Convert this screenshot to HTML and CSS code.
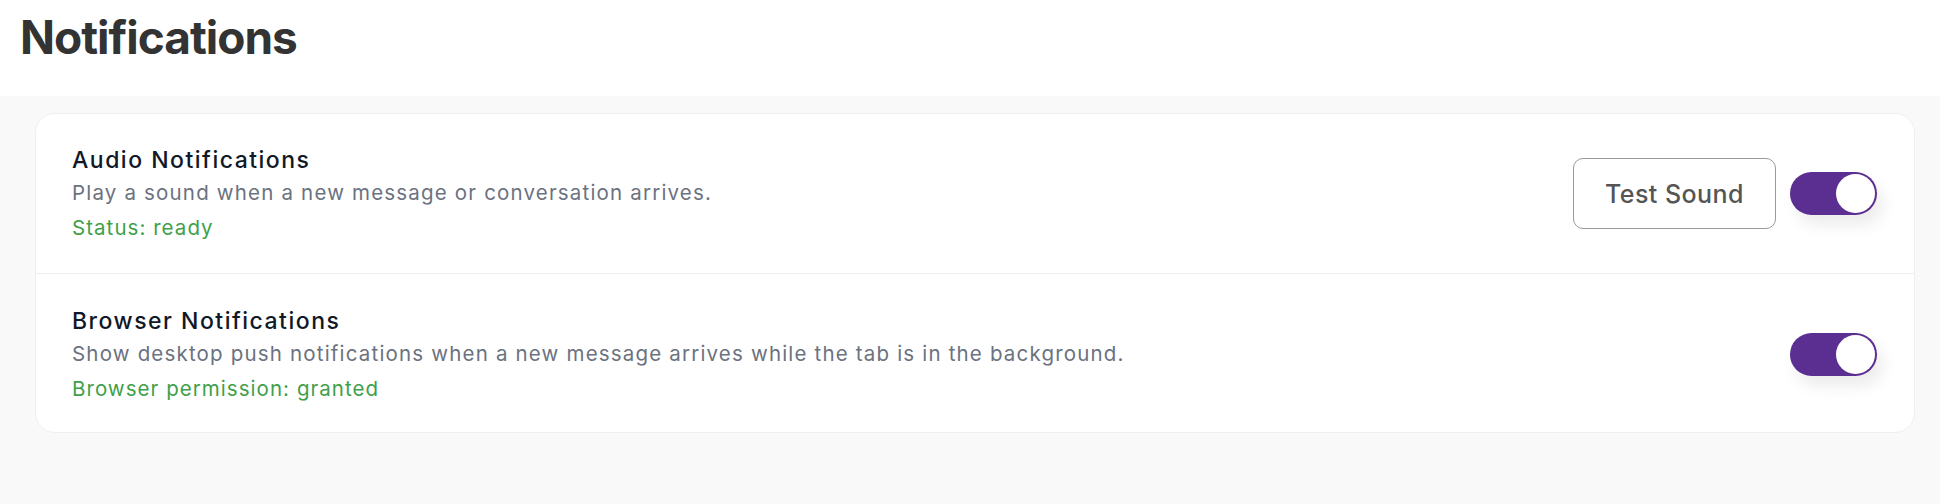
FILE: index.html
```html
<!DOCTYPE html>
<html lang="en">
<head>
<meta charset="utf-8">
<title>Notifications</title>
<link rel="stylesheet" href="styles.css">
</head>
<body>
<header class="page-header">
  <h1 class="page-title">Notifications</h1>
</header>
<main class="page-body">
  <section class="card">
    <div class="setting-row">
      <div class="setting-text">
        <div class="setting-title">Audio Notifications</div>
        <div class="setting-desc">Play a sound when a new message or conversation arrives.</div>
        <div class="setting-status">Status: ready</div>
      </div>
      <div class="setting-controls">
        <button class="btn-outline" type="button">Test Sound</button>
        <label class="switch">
          <input type="checkbox" checked>
          <span class="switch-track"></span>
        </label>
      </div>
    </div>
    <div class="setting-row">
      <div class="setting-text">
        <div class="setting-title">Browser Notifications</div>
        <div class="setting-desc">Show desktop push notifications when a new message arrives while the tab is in the background.</div>
        <div class="setting-status">Browser permission: granted</div>
      </div>
      <div class="setting-controls">
        <label class="switch">
          <input type="checkbox" checked>
          <span class="switch-track"></span>
        </label>
      </div>
    </div>
  </section>
</main>
</body>
</html>
```

FILE: styles.css
```css
* { box-sizing: border-box; }

html, body {
  margin: 0;
  padding: 0;
}

body {
  font-family: "Inter", "Noto Sans", sans-serif;
  background: #f9f9f9;
  color: #333333;
  min-height: 504px;
}

.page-header {
  background: #ffffff;
  height: 96px;
  padding: 10px 20px 0;
}

.page-title {
  margin: 0;
  font-size: 46px;
  line-height: 1.21;
  font-weight: 700;
  letter-spacing: -1px;
  color: #333333;
}

.page-body {
  padding: 17px 25px 40px 35px;
}

.card {
  background: #ffffff;
  border: 1px solid #efefef;
  border-radius: 20px;
}

.setting-row {
  display: flex;
  align-items: center;
  justify-content: space-between;
  padding: 29px 37px 29px 36px;
}

.setting-row + .setting-row {
  border-top: 1px solid #eeeeee;
  padding: 30px 37px 27px 36px;
}

.setting-text {
  display: flex;
  flex-direction: column;
}

.setting-title {
  font-size: 23px;
  line-height: 34px;
  font-weight: 500;
  letter-spacing: 1.5px;
  color: #111827;
}

.setting-desc {
  font-size: 20.5px;
  line-height: 32px;
  letter-spacing: 1.18px;
  color: #6b7280;
}

.setting-status {
  margin-top: 3px;
  font-size: 20.5px;
  line-height: 32px;
  letter-spacing: 1.05px;
  color: #3f9f4a;
}

.setting-controls {
  display: flex;
  align-items: center;
  gap: 14px;
}

.btn-outline {
  width: 203px;
  height: 71px;
  background: #ffffff;
  border: 1.5px solid #9a9a9a;
  border-radius: 10px;
  font-family: inherit;
  font-size: 25px;
  font-weight: 500;
  letter-spacing: 0.45px;
  color: #555555;
  cursor: pointer;
}

.switch {
  position: relative;
  display: inline-block;
  width: 87px;
  height: 43px;
}

.switch input {
  opacity: 0;
  width: 0;
  height: 0;
  position: absolute;
}

.switch-track {
  position: absolute;
  inset: 0;
  background: #5b2e91;
  border-radius: 22px;
  box-shadow: 6px 10px 16px rgba(0, 0, 0, 0.08);
}

.switch-track::after {
  content: "";
  position: absolute;
  top: 2px;
  right: 2px;
  width: 39px;
  height: 39px;
  border-radius: 50%;
  background: #ffffff;
}
```
